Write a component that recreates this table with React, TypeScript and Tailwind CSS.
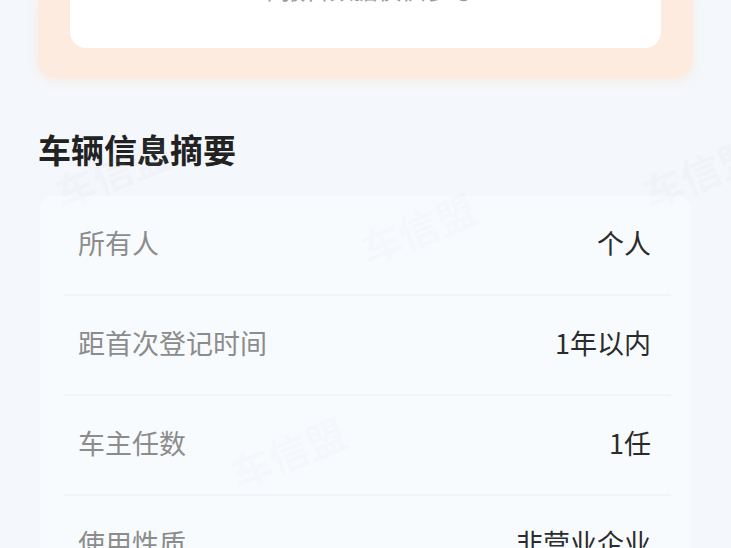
import React from "react";

const rows = [
  { label: "所有人", value: "个人" },
  { label: "距首次登记时间", value: "1年以内" },
  { label: "车主任数", value: "1任" },
  { label: "使用性质", value: "非营业企业" },
];

const marks = [
  { left: 52, top: 152 },
  { left: 358, top: 208 },
  { left: 640, top: 152 },
  { left: 228, top: 432 },
];

export default function App() {
  return (
    <div
      className="relative w-full h-[548px] overflow-hidden bg-[#f4f7fb]"
      style={{ fontFamily: '"Noto Sans CJK SC", "Noto Sans", sans-serif' }}
    >
      {/* top panel */}
      <div className="mx-[38px] rounded-b-[18px] bg-[#fdebe0] px-[32px] pb-[30px] shadow-[0_2px_10px_rgba(253,225,205,0.6)]">
        <div className="h-[48px] overflow-hidden rounded-b-[16px] bg-white flex justify-center">
          <div className="-mt-[27px] text-[24px] leading-[32px] text-[#9a9a9a]">
            本报告数据仅供参考
          </div>
        </div>
      </div>

      {/* heading */}
      <h2 className="mt-[51px] ml-[38px] text-[33px] leading-[40px] font-bold text-[#222222]">
        车辆信息摘要
      </h2>

      {/* card */}
      <div className="mx-[40px] mt-[27px] rounded-[14px] bg-[#f8fbfe]">
        {rows.map((r, i) => (
          <div key={r.label}>
            <div className="h-[98px] flex items-center justify-between pl-[38px] pr-[40px] pb-[6px]">
              <span className="text-[27px] leading-none text-[#8c8c8c]">{r.label}</span>
              <span className="text-[27px] leading-none text-[#2b2b2b]">{r.value}</span>
            </div>
            {i < rows.length - 1 && (
              <div className="ml-[24px] mr-[20px] h-[2px] bg-[#f1f4f8]" />
            )}
          </div>
        ))}
      </div>

      {/* watermarks */}
      {marks.map((m, i) => (
        <div
          key={i}
          className="absolute pointer-events-none text-[40px] font-bold leading-none text-[rgba(190,195,210,0.07)] -rotate-[22deg] whitespace-nowrap"
          style={{ left: m.left, top: m.top }}
        >
          车信盟
        </div>
      ))}
    </div>
  );
}
